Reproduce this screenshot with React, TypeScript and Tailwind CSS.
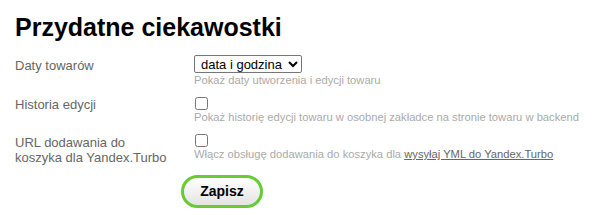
export default function App() {
  return (
    <div className="w-[611px] h-[215px] bg-white px-[15px] pt-[9px] font-['Liberation_Sans',Arial,sans-serif]">
      <h1 className="text-[25px] font-bold leading-[36px] text-black">Przydatne ciekawostki</h1>
      <div className="mt-[10px] flex flex-col text-[13px]">
        <div className="flex">
          <div className="w-[179px] shrink-0 pt-[3px] text-[#666] leading-[16px]">Daty towarów</div>
          <div className="flex flex-col items-start">
            <select className="h-[18px] w-[108px] border border-[#767676] rounded-[2px] text-[13px] leading-[16px] text-black pl-[2px] bg-white">
              <option>data i godzina</option>
            </select>
            <div className="text-[11.2px] leading-[14px] text-[#aaa]">Pokaż daty utworzenia i edycji towaru</div>
          </div>
        </div>

        <div className="mt-[10px] flex">
          <div className="w-[179px] shrink-0 text-[#666] leading-[16px]">Historia edycji</div>
          <div className="flex flex-col items-start">
            <input type="checkbox" className="ml-[1px] h-[13px] w-[13px]" />
            <div className="text-[11.2px] leading-[14px] text-[#aaa]">Pokaż historię edycji towaru w osobnej zakładce na stronie towaru w backend</div>
          </div>
        </div>

        <div className="mt-[10px] flex">
          <div className="w-[179px] shrink-0 pt-[1px] text-[#666] leading-[15px]">
            URL dodawania do
            <br />
            koszyka dla Yandex.Turbo
          </div>
          <div className="flex flex-col items-start">
            <input type="checkbox" className="ml-[1px] h-[13px] w-[13px]" />
            <div className="text-[11.2px] leading-[14px] text-[#aaa]">
              Włącz obsługę dodawania do koszyka dla{" "}
              <a href="#" className="text-[#666] underline">wysyłaj YML do Yandex.Turbo</a>
            </div>
          </div>
        </div>

        <div className="mt-[10px] pl-[166px]">
          <button className="h-[33px] w-[82px] rounded-full border-[3px] border-[#6c3] bg-gradient-to-b from-white to-[#e4e4e4] text-[14px] font-bold text-black">
            Zapisz
          </button>
        </div>
      </div>
    </div>
  );
}
